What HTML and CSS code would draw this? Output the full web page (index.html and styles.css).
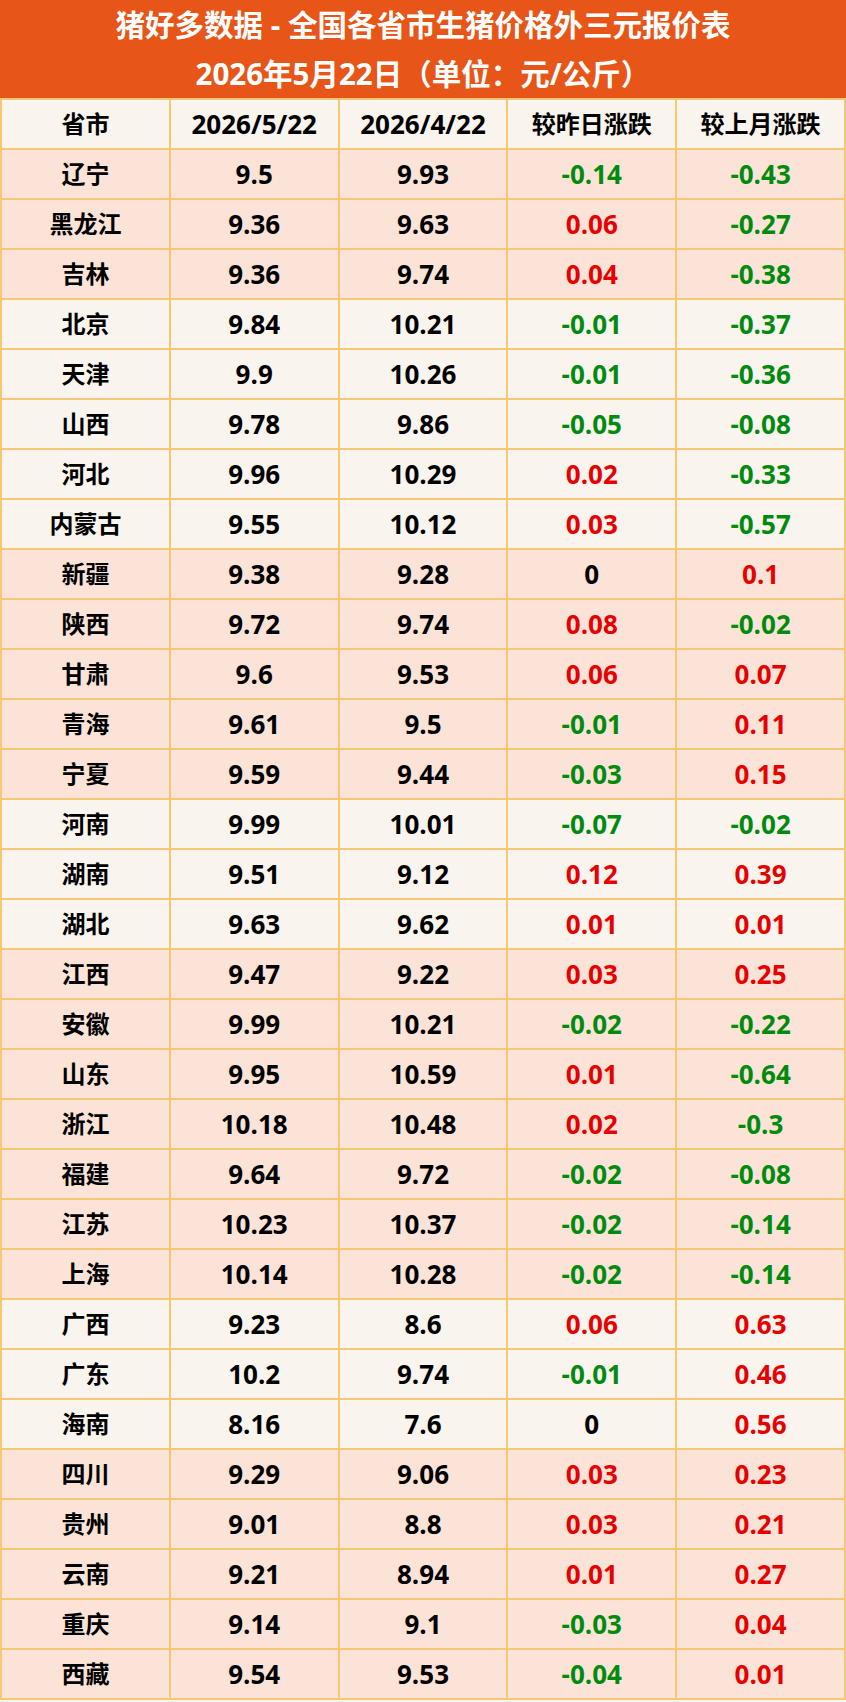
FILE: index.html
```html
<!DOCTYPE html>
<html lang="zh-CN">
<head>
<meta charset="utf-8">
<title>猪好多数据 - 全国各省市生猪价格外三元报价表</title>
<link rel="stylesheet" href="styles.css">
</head>
<body>
<div class="sheet">
  <div class="title">
    <div class="title-line">猪好多数据 - 全国各省市生猪价格外三元报价表</div>
    <div class="title-line">2026年5月22日（单位：元/公斤）</div>
  </div>
  <table class="grid">
    <thead>
      <tr class="head"><th class="cjk">省市</th><th>2026/5/22</th><th>2026/4/22</th><th class="cjk">较昨日涨跌</th><th class="cjk">较上月涨跌</th></tr>
    </thead>
    <tbody>
      <tr class="peach"><td>辽宁</td><td>9.5</td><td>9.93</td><td class="down">-0.14</td><td class="down">-0.43</td></tr>
      <tr class="peach"><td>黑龙江</td><td>9.36</td><td>9.63</td><td class="up">0.06</td><td class="down">-0.27</td></tr>
      <tr class="peach"><td>吉林</td><td>9.36</td><td>9.74</td><td class="up">0.04</td><td class="down">-0.38</td></tr>
      <tr class="plain"><td>北京</td><td>9.84</td><td>10.21</td><td class="down">-0.01</td><td class="down">-0.37</td></tr>
      <tr class="plain"><td>天津</td><td>9.9</td><td>10.26</td><td class="down">-0.01</td><td class="down">-0.36</td></tr>
      <tr class="plain"><td>山西</td><td>9.78</td><td>9.86</td><td class="down">-0.05</td><td class="down">-0.08</td></tr>
      <tr class="plain"><td>河北</td><td>9.96</td><td>10.29</td><td class="up">0.02</td><td class="down">-0.33</td></tr>
      <tr class="plain"><td>内蒙古</td><td>9.55</td><td>10.12</td><td class="up">0.03</td><td class="down">-0.57</td></tr>
      <tr class="peach"><td>新疆</td><td>9.38</td><td>9.28</td><td>0</td><td class="up">0.1</td></tr>
      <tr class="peach"><td>陕西</td><td>9.72</td><td>9.74</td><td class="up">0.08</td><td class="down">-0.02</td></tr>
      <tr class="peach"><td>甘肃</td><td>9.6</td><td>9.53</td><td class="up">0.06</td><td class="up">0.07</td></tr>
      <tr class="peach"><td>青海</td><td>9.61</td><td>9.5</td><td class="down">-0.01</td><td class="up">0.11</td></tr>
      <tr class="peach"><td>宁夏</td><td>9.59</td><td>9.44</td><td class="down">-0.03</td><td class="up">0.15</td></tr>
      <tr class="plain"><td>河南</td><td>9.99</td><td>10.01</td><td class="down">-0.07</td><td class="down">-0.02</td></tr>
      <tr class="plain"><td>湖南</td><td>9.51</td><td>9.12</td><td class="up">0.12</td><td class="up">0.39</td></tr>
      <tr class="plain"><td>湖北</td><td>9.63</td><td>9.62</td><td class="up">0.01</td><td class="up">0.01</td></tr>
      <tr class="peach"><td>江西</td><td>9.47</td><td>9.22</td><td class="up">0.03</td><td class="up">0.25</td></tr>
      <tr class="peach"><td>安徽</td><td>9.99</td><td>10.21</td><td class="down">-0.02</td><td class="down">-0.22</td></tr>
      <tr class="peach"><td>山东</td><td>9.95</td><td>10.59</td><td class="up">0.01</td><td class="down">-0.64</td></tr>
      <tr class="peach"><td>浙江</td><td>10.18</td><td>10.48</td><td class="up">0.02</td><td class="down">-0.3</td></tr>
      <tr class="peach"><td>福建</td><td>9.64</td><td>9.72</td><td class="down">-0.02</td><td class="down">-0.08</td></tr>
      <tr class="peach"><td>江苏</td><td>10.23</td><td>10.37</td><td class="down">-0.02</td><td class="down">-0.14</td></tr>
      <tr class="peach"><td>上海</td><td>10.14</td><td>10.28</td><td class="down">-0.02</td><td class="down">-0.14</td></tr>
      <tr class="plain"><td>广西</td><td>9.23</td><td>8.6</td><td class="up">0.06</td><td class="up">0.63</td></tr>
      <tr class="plain"><td>广东</td><td>10.2</td><td>9.74</td><td class="down">-0.01</td><td class="up">0.46</td></tr>
      <tr class="plain"><td>海南</td><td>8.16</td><td>7.6</td><td>0</td><td class="up">0.56</td></tr>
      <tr class="peach"><td>四川</td><td>9.29</td><td>9.06</td><td class="up">0.03</td><td class="up">0.23</td></tr>
      <tr class="peach"><td>贵州</td><td>9.01</td><td>8.8</td><td class="up">0.03</td><td class="up">0.21</td></tr>
      <tr class="peach"><td>云南</td><td>9.21</td><td>8.94</td><td class="up">0.01</td><td class="up">0.27</td></tr>
      <tr class="peach"><td>重庆</td><td>9.14</td><td>9.1</td><td class="down">-0.03</td><td class="up">0.04</td></tr>
      <tr class="peach"><td>西藏</td><td>9.54</td><td>9.53</td><td class="down">-0.04</td><td class="up">0.01</td></tr>
    </tbody>
  </table>
</div>
</body>
</html>
```

FILE: styles.css
```css
html, body {
  margin: 0;
  padding: 0;
  background: #faf4ef;
}

.sheet {
  width: 846px;
  font-family: "Open Sans", "Noto Sans CJK SC", sans-serif;
  font-weight: 700;
  color: #000;
}

.title {
  height: 98px;
  background: #e75618;
  color: #fff;
  display: flex;
  flex-direction: column;
  align-items: center;
}

.title-line {
  height: 49px;
  line-height: 49px;
  font-size: 29.5px;
  font-weight: 700;
  white-space: nowrap;
}

.grid {
  width: 846px;
  table-layout: fixed;
  border-collapse: separate;
  border-spacing: 2px;
  background: #f7c873;
}

.grid th,
.grid td {
  height: 48px;
  padding: 0;
  text-align: center;
  vertical-align: middle;
  font-size: 26px;
  font-weight: 700;
  line-height: 30px;
  white-space: nowrap;
}

.grid th.cjk,
.grid td:first-child {
  font-size: 24px;
}

.head th {
  background: #faf4ef;
}

.peach td {
  background: #fbe4d7;
}

.plain td {
  background: #faf4ef;
}

.grid .up {
  color: #e60000;
}

.grid .down {
  color: #008a0e;
}
```
